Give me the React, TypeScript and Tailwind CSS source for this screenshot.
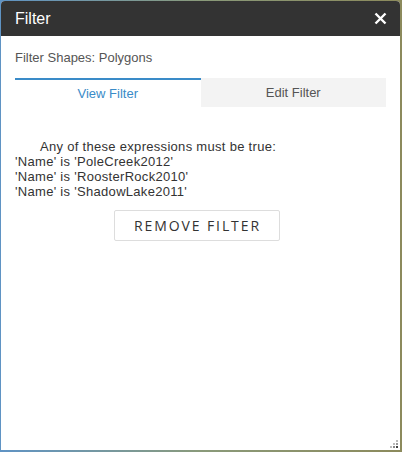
import React from "react";

export default function App() {
  return (
    <div
      className="w-[402px] h-[452px] bg-gradient-to-r from-[#5f93c4] via-[#8a9a7a] to-[#8c8a5c] pt-px pl-px pr-[2px] pb-[2px]"
      style={{ fontFamily: '"Liberation Sans", Arial, sans-serif' }}
    >
      <div className="relative w-[399px] h-[449px] bg-white rounded-t-[4px] flex flex-col overflow-hidden">
        <div className="h-[35px] bg-[#333333] flex items-center justify-between pl-[14px] pr-[13px] shrink-0">
          <span className="text-white text-[16px] leading-none">Filter</span>
          <svg width="13" height="13" viewBox="0 0 13 13">
            <path d="M1.5 1.5 L11.5 11.5 M11.5 1.5 L1.5 11.5" stroke="#ffffff" strokeWidth="2.4" strokeLinecap="butt" />
          </svg>
        </div>
        <div className="px-[14px]">
          <div className="mt-[14px] text-[13px] leading-[16px] text-[#555555]">Filter Shapes: Polygons</div>
          <div className="mt-[12px] flex h-[29px] text-[13px]">
            <div className="flex-1 border-t-[2px] border-[#3a8bc8] text-[#3a8bc8] flex items-center justify-center pt-[1px]">
              View Filter
            </div>
            <div className="flex-1 bg-[#f3f3f3] text-[#555555] flex items-center justify-center">Edit Filter</div>
          </div>
          <div className="mt-[32px] text-[13px] leading-[15px] tracking-[0.3px] text-[#333333]">
            <div className="pl-[25px]">Any of these expressions must be true:</div>
            <div>'Name' is 'PoleCreek2012'</div>
            <div>'Name' is 'RoosterRock2010'</div>
            <div>'Name' is 'ShadowLake2011'</div>
          </div>
          <div className="mt-[11px] flex justify-center pr-[8px]">
            <button
              className="w-[166px] h-[31px] border border-[#dddddd] rounded-[2px] bg-white text-[14px] tracking-[1.9px] text-[#333333] pl-[2px]"
              style={{ fontFamily: '"Open Sans", "Liberation Sans", sans-serif' }}
            >
              REMOVE FILTER
            </button>
          </div>
        </div>
        <svg className="absolute right-[1px] bottom-[1px]" width="10" height="10" viewBox="0 0 10 10">
          <rect x="7" y="1" width="2" height="2" fill="#bbbbbb" />
          <rect x="4" y="4" width="2" height="2" fill="#bbbbbb" />
          <rect x="7" y="4" width="2" height="2" fill="#999999" />
          <rect x="1" y="7" width="2" height="2" fill="#bbbbbb" />
          <rect x="4" y="7" width="2" height="2" fill="#888888" />
          <rect x="7" y="7" width="2" height="2" fill="#444444" />
        </svg>
      </div>
    </div>
  );
}
